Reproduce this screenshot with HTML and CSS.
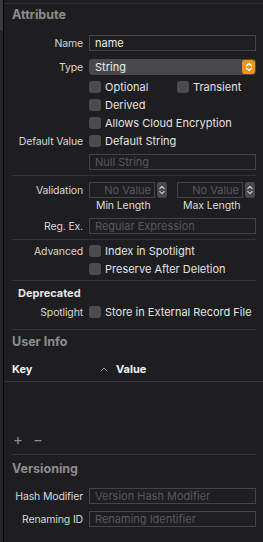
FILE: index.html
```html
<!DOCTYPE html>
<html>
<head>
<meta charset="utf-8">
<link rel="stylesheet" href="styles.css">
</head>
<body>
<div class="window">
  <div class="edge"></div>
  <div class="panel">
    <div class="section-title t-attr">Attribute</div>

    <div class="row r-name">
      <span class="lbl">Name</span>
      <div class="tf">name</div>
    </div>

    <div class="row r-type">
      <span class="lbl">Type</span>
      <div class="popup">
        <span>String</span>
        <span class="popup-btn">
          <svg width="8" height="10" viewBox="0 0 8 10"><path d="M1.5 3.8 L4 1.5 L6.5 3.8 M1.5 6.2 L4 8.5 L6.5 6.2" fill="none" stroke="#fff" stroke-width="1.3" stroke-linecap="round" stroke-linejoin="round"/></svg>
        </span>
      </div>
    </div>

    <div class="row r-check r-opt">
      <span class="lbl"></span>
      <div class="pair">
        <span class="cb-item w-opt"><span class="cb"></span>Optional</span>
        <span class="cb-item"><span class="cb"></span>Transient</span>
      </div>
    </div>
    <div class="row r-check">
      <span class="lbl"></span>
      <span class="cb-item"><span class="cb"></span>Derived</span>
    </div>
    <div class="row r-check">
      <span class="lbl"></span>
      <span class="cb-item"><span class="cb"></span>Allows Cloud Encryption</span>
    </div>
    <div class="row r-check">
      <span class="lbl">Default Value</span>
      <span class="cb-item"><span class="cb"></span>Default String</span>
    </div>
    <div class="row r-null">
      <span class="lbl"></span>
      <div class="tf ph">Null String</div>
    </div>

    <div class="sep s1"></div>

    <div class="row r-valid">
      <span class="lbl">Validation</span>
      <div class="pair">
        <div class="num w-opt">
          <div class="tf ph num-tf">No Value</div>
          <span class="stepper"><svg width="8" height="12" viewBox="0 0 8 12"><path d="M1.8 4.6 L4 2.4 L6.2 4.6 M1.8 7.4 L4 9.6 L6.2 7.4" fill="none" stroke="#d0d0d0" stroke-width="1.1" stroke-linecap="round" stroke-linejoin="round"/></svg></span>
        </div>
        <div class="num">
          <div class="tf ph num-tf">No Value</div>
          <span class="stepper"><svg width="8" height="12" viewBox="0 0 8 12"><path d="M1.8 4.6 L4 2.4 L6.2 4.6 M1.8 7.4 L4 9.6 L6.2 7.4" fill="none" stroke="#d0d0d0" stroke-width="1.1" stroke-linecap="round" stroke-linejoin="round"/></svg></span>
        </div>
      </div>
    </div>
    <div class="row r-sub">
      <span class="lbl"></span>
      <div class="pair">
        <span class="sub w-opt">Min Length</span>
        <span class="sub">Max Length</span>
      </div>
    </div>
    <div class="row r-regex">
      <span class="lbl">Reg. Ex.</span>
      <div class="tf ph">Regular Expression</div>
    </div>

    <div class="sep s2"></div>

    <div class="row r-check r-adv">
      <span class="lbl">Advanced</span>
      <span class="cb-item"><span class="cb"></span>Index in Spotlight</span>
    </div>
    <div class="row r-check">
      <span class="lbl"></span>
      <span class="cb-item"><span class="cb"></span>Preserve After Deletion</span>
    </div>

    <div class="sep s3"></div>

    <div class="subhead">Deprecated</div>
    <div class="row r-check r-spot">
      <span class="lbl">Spotlight</span>
      <span class="cb-item"><span class="cb"></span>Store in External Record File</span>
    </div>

    <div class="sep s4"></div>

    <div class="section-title t-user">User Info</div>
    <div class="table-head">
      <span class="col-key">Key</span>
      <span class="col-val"><span class="chev">
        <svg width="8" height="5" viewBox="0 0 8 5"><path d="M0.8 4.2 L4 1 L7.2 4.2" fill="none" stroke="#a0a0a0" stroke-width="1"/></svg>
      </span>Value</span>
    </div>
    <div class="table-body"></div>
    <div class="addrem">
      <span class="plus">+</span>
      <span class="minus">−</span>
    </div>

    <div class="sep s5"></div>

    <div class="section-title t-vers">Versioning</div>
    <div class="row r-hash">
      <span class="lbl">Hash Modifier</span>
      <div class="tf ph">Version Hash Modifier</div>
    </div>
    <div class="row r-ren">
      <span class="lbl">Renaming ID</span>
      <div class="tf ph">Renaming Identifier</div>
    </div>
  </div>
</div>
</body>
</html>
```

FILE: styles.css
```css
html, body {
  margin: 0;
  padding: 0;
  background: #1e1e20;
}
body {
  font-family: Inter, "Liberation Sans", sans-serif;
  font-size: 11px;
  color: #dcdcdc;
  width: 263px;
  height: 542px;
  overflow: hidden;
}
.window {
  display: flex;
  height: 542px;
}
.edge {
  width: 3px;
  flex: none;
  background: linear-gradient(#3a3a3c 0, #3a3a3c 30px, #252527 30px);
  border-right: 1px solid #000;
}
.panel {
  flex: 1;
  margin-top: 3px;
  border-top: 1px solid #2f2f31;
  padding: 0 7px 0 8px;
  display: flex;
  flex-direction: column;
}
.section-title {
  font-weight: 700;
  font-size: 12.5px;
  color: #8c8c8e;
  height: 22px;
  line-height: 22px;
}
.row {
  display: grid;
  grid-template-columns: 71px 167px;
  column-gap: 6px;
  align-items: center;
}
.lbl {
  text-align: right;
  white-space: nowrap;
  color: #d6d6d6;
  font-size: 10.5px;
  letter-spacing: -0.15px;
}
.tf {
  height: 16px;
  box-sizing: border-box;
  border: 1px solid #444446;
  background: #1f1f21;
  padding: 0 5px;
  line-height: 14px;
  color: #e8e8e8;
  white-space: nowrap;
  overflow: hidden;
}
.tf.ph {
  color: #58585a;
}
.r-name { margin-top: 9px; height: 16px; }
.r-type { margin-top: 8px; height: 16px; }
.popup {
  height: 16px;
  background: #48484a;
  border-radius: 4px;
  display: flex;
  align-items: center;
  justify-content: space-between;
  padding: 0 1px 0 6px;
  color: #ececec;
}
.popup-btn {
  width: 13px;
  height: 14px;
  border-radius: 3px;
  background: #f0941c;
  display: flex;
  align-items: center;
  justify-content: center;
}
.r-check { height: 18px; }
.r-opt { margin-top: 3px; }
.pair {
  display: flex;
  align-items: center;
}
.w-opt { width: 88px; flex: none; }
.cb-item {
  display: flex;
  align-items: center;
  white-space: nowrap;
  color: #e2e2e2;
}
.cb {
  width: 12px;
  height: 12px;
  border-radius: 3px;
  background: #4c4c4e;
  margin-right: 4px;
  flex: none;
}
.r-null { margin-top: 4px; height: 16px; }
.sep {
  height: 1px;
  background: #343436;
}
.s1 { margin-top: 5px; }
.r-valid { margin-top: 6px; height: 16px; }
.num {
  display: flex;
  align-items: center;
}
.num-tf {
  width: 66px;
  text-align: right;
  padding-right: 3px;
}
.stepper {
  width: 10px;
  height: 16px;
  margin-left: 2px;
  background: #4a4a4c;
  border-radius: 3px;
  display: flex;
  align-items: center;
  justify-content: center;
}
.r-sub { height: 14px; }
.sub {
  display: block;
  color: #dcdcdc;
  font-size: 10.5px;
  letter-spacing: -0.1px;
}
.sub.w-opt { width: 88px; padding-left: 7px; box-sizing: border-box; }
.pair .sub:last-child { padding-left: 6px; }
.r-regex { margin-top: 6px; height: 16px; }
.s2 { margin-top: 5px; }
.r-adv { margin-top: 2px; }
.s3 { margin-top: 2px; }
.subhead {
  margin-top: 3px;
  height: 18px;
  line-height: 18px;
  padding-left: 6px;
  font-weight: 700;
  color: #e4e4e4;
}
.r-spot { margin-top: 1px; }
.s4 { margin-top: 8px; }
.t-user { margin-top: 1px; }
.table-head {
  margin: 4px -7px 0 -8px;
  padding-left: 8px;
  height: 24px;
  border-bottom: 1px solid #343436;
  display: flex;
  align-items: center;
  font-weight: 700;
  color: #f0f0f0;
}
.col-key { width: 87px; }
.col-val { display: flex; align-items: center; }
.chev { display: inline-flex; width: 16px; margin-left: 1px; }
.table-body { height: 47px; }
.addrem {
  height: 20px;
  display: flex;
  align-items: center;
  padding-left: 1px;
  color: #8a8a8c;
  font-size: 15px;
}
.plus { width: 20px; }
.s5 { margin-top: 5px; }
.t-vers { margin-top: 3px; }
.r-hash { margin-top: 8px; height: 16px; }
.r-ren { margin-top: 7px; height: 16px; }
```
